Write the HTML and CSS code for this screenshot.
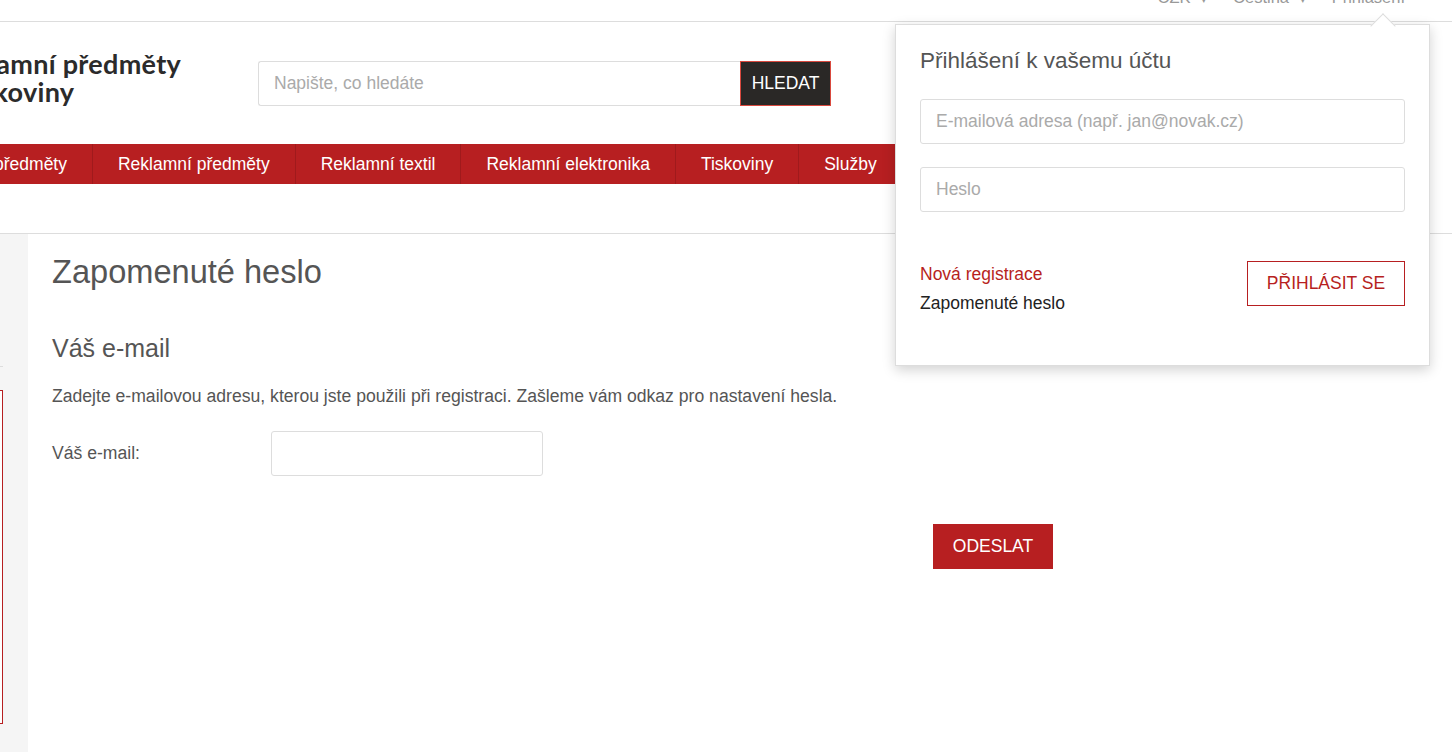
FILE: index.html
```html
<!DOCTYPE html>
<html lang="cs">
<head>
<meta charset="utf-8">
<title>Zapomenuté heslo</title>
<link rel="stylesheet" href="styles.css">
</head>
<body>
<div class="topbar">
  <div class="topbar-links">
    <span class="tb-item">CZK <span class="caret">▾</span></span>
    <span class="tb-item">Čeština <span class="caret">▾</span></span>
    <span class="tb-item">Přihlášení</span>
  </div>
</div>
<div class="wrap">
  <header class="header">
    <div class="logo">Reklamní předměty<br>a tiskoviny</div>
    <form class="search">
      <input class="search-input" type="text" placeholder="Napište, co hledáte">
      <button class="search-btn" type="button">HLEDAT</button>
    </form>
  </header>
  <nav class="nav">
    <a class="nav-item nav-first">Dárkové předměty</a>
    <a class="nav-item">Reklamní předměty</a>
    <a class="nav-item">Reklamní textil</a>
    <a class="nav-item">Reklamní elektronika</a>
    <a class="nav-item">Tiskoviny</a>
    <a class="nav-item">Služby</a>
    <a class="nav-item">Kontakt</a>
  </nav>
</div>
<div class="divider"></div>
<div class="wrap body-row">
  <aside class="sidebar">
    <div class="side-top"></div>
    <div class="side-line"></div>
    <div class="side-box"></div>
  </aside>
  <main class="main">
    <h1 class="title">Zapomenuté heslo</h1>
    <h2 class="subtitle">Váš e-mail</h2>
    <p class="lead">Zadejte e-mailovou adresu, kterou jste použili při registraci. Zašleme vám odkaz pro nastavení hesla.</p>
    <div class="form">
      <div class="form-row">
        <label class="form-label">Váš e-mail:</label>
        <input class="form-input" type="email">
      </div>
      <div class="form-actions">
        <button class="btn-send" type="button">ODESLAT</button>
      </div>
    </div>
  </main>
</div>

<div class="login-pop">
  <h3 class="pop-title">Přihlášení k vašemu účtu</h3>
  <input class="pop-input pop-email" type="email" placeholder="E-mailová adresa (např. jan@novak.cz)">
  <input class="pop-input" type="password" placeholder="Heslo">
  <div class="pop-bottom">
    <div class="pop-links">
      <a class="pop-reg">Nová registrace</a>
      <a class="pop-forgot">Zapomenuté heslo</a>
    </div>
    <button class="btn-login" type="button">PŘIHLÁSIT SE</button>
  </div>
</div>
</body>
</html>
```
FILE: styles.css
```css
html, body {
  margin: 0;
  padding: 0;
}
body {
  width: 1452px;
  height: 752px;
  overflow: hidden;
  background: #fff;
  font-family: "Liberation Sans", Arial, sans-serif;
  color: #555;
  position: relative;
}
.topbar {
  height: 21px;
  border-bottom: 1px solid #ddd;
  overflow: hidden;
}
.topbar-links {
  display: flex;
  justify-content: flex-end;
  padding-right: 47px;
  margin-top: -12px;
  font-size: 16.5px;
  line-height: 18px;
  color: #999;
}
.tb-item {
  margin-left: 26px;
}
.caret {
  font-size: 11px;
  margin-left: 6px;
}
.wrap {
  margin-left: -70px;
}
.header {
  display: flex;
  align-items: center;
  height: 122px;
}
.logo {
  width: 273px;
  padding-left: 13px;
  font-family: Lato, "Noto Sans", sans-serif;
  font-weight: 700;
  font-size: 27px;
  line-height: 28px;
  color: #2b2b2b;
  letter-spacing: 0.3px;
  margin-top: -10px;
}
.search {
  display: flex;
  margin: 0;
  margin-left: 42px;
}
.search-input {
  width: 482px;
  height: 45px;
  box-sizing: border-box;
  border: 1px solid #ddd;
  border-right: none;
  border-radius: 3px 0 0 3px;
  padding: 0 15px;
  font-family: "Liberation Sans", Arial, sans-serif;
  font-size: 17.5px;
  color: #555;
  outline: none;
}
.search-input::placeholder {
  color: #aaa;
}
.search-btn {
  width: 91px;
  height: 45px;
  border: 1px solid #d9493e;
  background: #2a2826;
  color: #fff;
  font-family: "Liberation Sans", Arial, sans-serif;
  font-size: 17.5px;
  padding: 0;
}
.nav {
  display: flex;
  height: 40px;
  background: #b71f21;
  width: 1100px;
}
.nav-item {
  display: flex;
  align-items: center;
  padding: 0 25px;
  color: #fff;
  font-size: 17.5px;
  border-right: 1px solid #a01a1c;
  white-space: nowrap;
}
.nav-first {
  padding-left: 0;
  margin-left: -6px;
}
.divider {
  height: 0;
  margin-top: 49px;
  border-top: 1px solid #ddd;
}
.body-row {
  display: flex;
  align-items: stretch;
  height: 518px;
}
.sidebar {
  width: 98px;
  background: #f5f5f5;
  box-sizing: border-box;
  padding-right: 25px;
  flex-shrink: 0;
}
.side-top {
  height: 132px;
}
.side-line {
  border-top: 1px solid #ddd;
}
.side-box {
  margin-top: 23px;
  height: 332px;
  border: 1px solid #b71f21;
  background: #fff;
}
.main {
  padding-left: 24px;
  width: 1001px;
}
.title {
  margin: 18px 0 0;
  font-size: 32.6px;
  line-height: 40px;
  font-weight: 400;
  color: #555;
}
.subtitle {
  margin: 41px 0 0;
  font-size: 25px;
  line-height: 30px;
  font-weight: 400;
  color: #555;
}
.lead {
  margin: 21px 0 0;
  font-size: 17.6px;
  line-height: 24px;
  color: #555;
}
.form-row {
  display: flex;
  align-items: center;
  margin-top: 23px;
}
.form-label {
  width: 219px;
  font-size: 17.6px;
  color: #555;
}
.form-input {
  width: 272px;
  height: 45px;
  box-sizing: border-box;
  border: 1px solid #ddd;
  border-radius: 3px;
  outline: none;
}
.form-actions {
  display: flex;
  justify-content: flex-end;
  margin-top: 48px;
}
.btn-send {
  width: 120px;
  height: 45px;
  background: #b71f21;
  border: none;
  color: #fff;
  font-family: "Liberation Sans", Arial, sans-serif;
  font-size: 17.5px;
  padding: 0;
}
.login-pop {
  position: absolute;
  left: 895px;
  top: 24px;
  width: 535px;
  height: 342px;
  box-sizing: border-box;
  background: #fff;
  border: 1px solid #ddd;
  box-shadow: 0 4px 12px rgba(0, 0, 0, 0.18);
  padding: 22px 24px 0;
}
.login-pop::before {
  content: "";
  position: absolute;
  top: -8px;
  left: 478px;
  width: 17px;
  height: 17px;
  background: #fff;
  border-left: 1px solid #ddd;
  border-top: 1px solid #ddd;
  transform: rotate(45deg);
}
.pop-title {
  margin: 0;
  font-size: 22.5px;
  line-height: 28px;
  font-weight: 400;
  color: #555;
}
.pop-input {
  display: block;
  width: 485px;
  height: 45px;
  box-sizing: border-box;
  margin-top: 23px;
  border: 1px solid #ddd;
  border-radius: 3px;
  padding: 0 15px;
  font-family: "Liberation Sans", Arial, sans-serif;
  font-size: 17.5px;
  outline: none;
}
.pop-email {
  margin-top: 24px;
}
.pop-input::placeholder {
  color: #aaa;
}
.pop-bottom {
  display: flex;
  justify-content: space-between;
  align-items: flex-start;
  margin-top: 49px;
}
.pop-links {
  display: flex;
  flex-direction: column;
  font-size: 17.5px;
  line-height: 29px;
  margin-top: -1px;
}
.pop-reg {
  color: #b71f21;
}
.pop-forgot {
  color: #222;
}
.btn-login {
  width: 158px;
  height: 45px;
  background: #fff;
  border: 1px solid #b71f21;
  color: #b71f21;
  font-family: "Liberation Sans", Arial, sans-serif;
  font-size: 17.5px;
  padding: 0;
}
```
